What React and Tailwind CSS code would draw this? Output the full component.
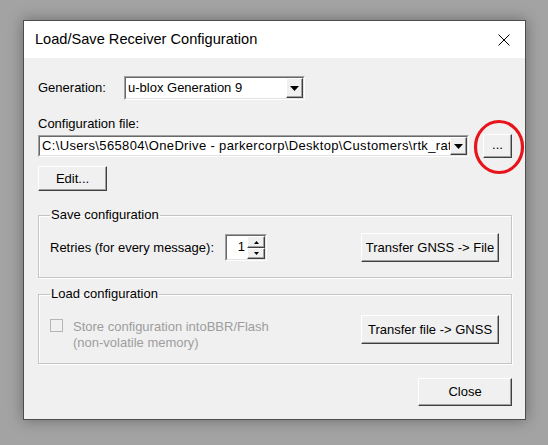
import React from "react";

const font = { fontFamily: '"Liberation Sans", Arial, sans-serif' };

function Raised({ className = "", children }) {
  return (
    <div
      className={`flex items-center justify-center bg-[#f0f0f0] border border-t-white border-l-white border-r-[#404040] border-b-[#404040] shadow-[inset_-1px_-1px_0_#a0a0a0] text-[13px] text-black whitespace-nowrap ${className}`}
    >
      {children}
    </div>
  );
}

function Arrow({ small }) {
  return small ? (
    <svg width="5" height="3" viewBox="0 0 5 3">
      <path d="M0 0h5L2.5 3z" fill="#000" />
    </svg>
  ) : (
    <svg width="9" height="5" viewBox="0 0 9 5">
      <path d="M0 0h9L4.5 5z" fill="#000" />
    </svg>
  );
}

function Combo({ value, className = "", textClass = "", arrowH }) {
  return (
    <div
      className={`flex items-stretch bg-white border border-t-[#a0a0a0] border-l-[#a0a0a0] border-r-white border-b-white ${className}`}
    >
      <div className="flex flex-1 items-stretch border border-t-[#696969] border-l-[#696969] border-r-[#e3e3e3] border-b-[#e3e3e3] overflow-hidden">
        <div className={`flex-1 flex items-center pl-[2px] whitespace-nowrap overflow-hidden text-[13px] text-black ${textClass}`}>
          {value}
        </div>
        <Raised className={`w-[17px] ${arrowH}`}>
          <Arrow />
        </Raised>
      </div>
    </div>
  );
}

function Group({ title, className = "", children }) {
  return (
    <fieldset
      className={`border border-[#c4c4c4] shadow-[1px_1px_0_#fff,inset_1px_1px_0_#fff] rounded-none pl-[11px] ${className}`}
    >
      <legend className="px-[1px] text-[13px] leading-[16px] text-black">{title}</legend>
      {children}
    </fieldset>
  );
}

export default function App() {
  return (
    <div className="w-[548px] h-[445px] bg-[#a3a3a3] pt-[20px] pl-[23px] overflow-hidden" style={font}>
      <div className="relative w-[503px] h-[400px] border border-[#4d4d4d] flex flex-col shadow-[0_0_14px_rgba(0,0,0,0.35)]">
        {/* Title bar */}
        <div className="h-[37px] bg-white flex items-center justify-between pl-[11px] pr-[15px]">
          <span className="text-[14.6px] text-black">Load/Save Receiver Configuration</span>
          <svg width="12" height="12" viewBox="0 0 12 12">
            <path d="M0.5 0.5L11.5 11.5M11.5 0.5L0.5 11.5" stroke="#000" strokeWidth="1" />
          </svg>
        </div>

        {/* Body */}
        <div className="flex-1 bg-[#f0f0f0] pl-[14px] pr-[13px] pt-[18px] flex flex-col">
          <div className="flex items-center h-[24px]">
            <span className="w-[86px] text-[13px] text-black">Generation:</span>
            <Combo value="u-blox Generation 9" className="w-[181px] h-[24px]" arrowH="h-[20px]" />
          </div>

          <div className="mt-[16px] text-[13px] leading-[16px] text-black">Configuration file:</div>
          <div className="mt-[2px] flex items-center">
            <Combo
              value="C:\Users\565804\OneDrive - parkercorp\Desktop\Customers\rtk_rate_config.txt"
              className="w-[431px] h-[22px]"
              textClass="tracking-[0.35px]"
              arrowH="h-[18px]"
            />
            <Raised className="ml-[14px] w-[29px] h-[24px] text-[12px] text-[#555] pb-[2px]">...</Raised>
          </div>

          <Raised className="mt-[8px] w-[69px] h-[25px]">Edit...</Raised>

          <Group title="Save configuration" className="mt-[16px] h-[71px]">
            <div className="flex items-center pt-[10px] pr-[12px]">
              <span className="w-[175px] text-[13px] text-black whitespace-nowrap">Retries (for every message):</span>
              <div className="flex w-[42px] h-[27px] border border-t-[#a0a0a0] border-l-[#a0a0a0] border-r-white border-b-white">
                <div className="flex flex-1 border border-t-[#696969] border-l-[#696969] border-r-[#e3e3e3] border-b-[#e3e3e3] bg-white">
                  <div className="flex-1 text-right pr-[2px] text-[13px] leading-[22px] text-black">1</div>
                  <div className="flex flex-col w-[18px]">
                    <Raised className="h-[12px] w-[18px]">
                      <svg width="5" height="3" viewBox="0 0 5 3">
                        <path d="M2.5 0L5 3H0z" fill="#000" />
                      </svg>
                    </Raised>
                    <Raised className="h-[11px] w-[18px]">
                      <Arrow small />
                    </Raised>
                  </div>
                </div>
              </div>
              <div className="flex-1" />
              <Raised className="w-[138px] h-[29px]">Transfer GNSS -&gt; File</Raised>
            </div>
          </Group>

          <Group title="Load configuration" className="mt-[8px] h-[78px]">
            <div className="flex items-start pt-[13px] pr-[12px]">
              <div className="mt-[4px] w-[13px] h-[13px] border border-[#b5b5b5] bg-[#f0f0f0]" />
              <div className="mt-[4px] ml-[10px] text-[13px] leading-[16px] text-[#9d9d9d] w-[220px]">
                <div>Store configuration intoBBR/Flash</div>
                <div>(non-volatile memory)</div>
              </div>
              <div className="flex-1" />
              <Raised className="w-[138px] h-[29px]">Transfer file -&gt; GNSS</Raised>
            </div>
          </Group>

          <div className="flex justify-end mt-[14px]">
            <Raised className="w-[94px] h-[28px]">Close</Raised>
          </div>
        </div>

        {/* red annotation circle */}
        <svg className="absolute left-[449px] top-[98px]" width="54" height="58" viewBox="0 0 54 58">
          <ellipse cx="26" cy="28" rx="23.5" ry="25.5" fill="none" stroke="#e8141c" strokeWidth="3.2" />
        </svg>
      </div>
    </div>
  );
}
